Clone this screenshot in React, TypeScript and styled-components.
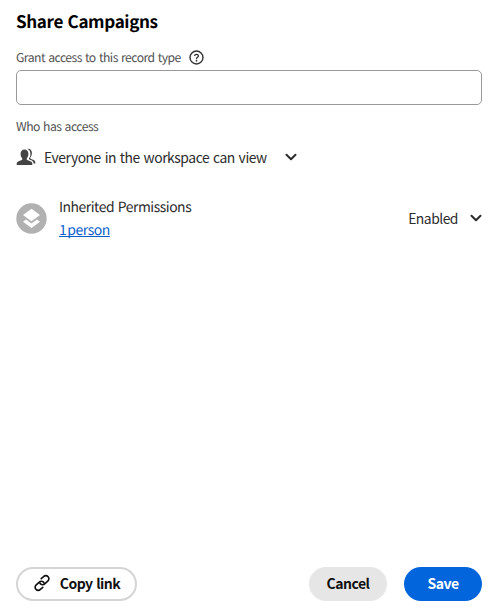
import React from "react";
import styled, { createGlobalStyle } from "styled-components";

const GlobalStyle = createGlobalStyle`
  *, *::before, *::after { box-sizing: border-box; }
  body {
    margin: 0;
    background: #fff;
    font-family: "Noto Sans CJK SC", "Noto Sans", sans-serif;
    text-rendering: geometricPrecision;
  }
`;

const Dialog = styled.main`
  display: flex;
  flex-direction: column;
  height: 611px;
  width: 500px;
  padding: 9px 18px 10px 16px;
  color: #2c2c2c;
`;

const Title = styled.h1`
  margin: 0;
  font-size: 17.1px;
  line-height: 24px;
  font-weight: 700;
  letter-spacing: -0.37px;
  word-spacing: 1px;
  color: #000;
`;

const LabelRow = styled.div`
  display: flex;
  align-items: center;
  gap: 8px;
  height: 16px;
  margin-top: 16px;
`;

const Label = styled.label`
  font-size: 12.2px;
  line-height: 16px;
  letter-spacing: -0.54px;
  word-spacing: 1px;
  color: #505050;
  white-space: nowrap;
`;

const AccessInput = styled.input`
  display: block;
  width: 466px;
  height: 35px;
  margin: 5px 0 0;
  padding: 0 10px;
  border: 1px solid #999;
  border-radius: 5px;
  background: #fff;
  font: inherit;
  outline: none;
`;

const SectionLabel = styled(Label)`
  display: block;
  margin-top: 13px;
`;

const AccessRow = styled.div`
  display: flex;
  align-items: center;
  height: 22px;
  margin-top: 12px;
`;

const Text = styled.span<{ $spacing: number }>`
  font-size: 13.9px;
  line-height: 22px;
  letter-spacing: ${({ $spacing }) => $spacing}px;
  word-spacing: 1.1px;
  white-space: nowrap;
`;

const PeopleIcon = styled.svg`
  flex: none;
  width: 20px;
  height: 18px;
  margin-right: 8px;
`;

const Picker = styled.button<{ $gap: number }>`
  display: flex;
  align-items: center;
  gap: ${({ $gap }) => $gap}px;
  padding: 0;
  border: 0;
  background: none;
  color: inherit;
  font: inherit;
`;

const PermissionRow = styled.div`
  display: flex;
  align-items: center;
  height: 46px;
  margin-top: 27px;
`;

const LayerIcon = styled.svg`
  flex: none;
  width: 31px;
  height: 31px;
`;

const PermissionText = styled.div`
  display: flex;
  flex-direction: column;
  align-items: flex-start;
  flex: 1;
  gap: 1px;
  margin-left: 12px;
  padding-top: 1px;
`;

const PersonLink = styled.a`
  font-size: 14px;
  line-height: 22px;
  letter-spacing: -0.45px;
  word-spacing: -1.8px;
  color: #0b5fcc;
  text-decoration: underline;
  text-decoration-thickness: 1px;
  text-underline-offset: 1px;
  text-decoration-skip-ink: none;
`;

const Footer = styled.footer`
  display: flex;
  align-items: center;
  margin-top: auto;
  height: 34px;
`;

type Variant = "outline" | "secondary" | "accent";

const variants: Record<Variant, string> = {
  outline: "width: 121px; border: 2px solid #d5d5d5; background: #fff; color: #111;",
  secondary: "width: 78px; margin-left: auto; background: #e6e6e6; color: #111;",
  accent: "width: 78px; margin-left: 17px; background: #0265dc; color: #fff;",
};

const Button = styled.button<{ $variant: Variant }>`
  display: flex;
  align-items: center;
  justify-content: center;
  gap: 9px;
  height: 34px;
  padding: 0 0 2px;
  border: 0;
  border-radius: 17px;
  font-family: inherit;
  font-size: 14px;
  line-height: 22px;
  font-weight: 700;
  letter-spacing: -0.5px;
  word-spacing: 0.8px;
  white-space: nowrap;
  ${({ $variant }) => variants[$variant]}
`;

const Chevron = () => (
  <svg width="12" height="8" viewBox="0 0 12 8" fill="none">
    <path d="M1.5 1.8 6 6.2l4.5-4.4" stroke="#2c2c2c" strokeWidth="2" strokeLinecap="round" strokeLinejoin="round" />
  </svg>
);

const HelpIcon = () => (
  <svg width="15" height="15" viewBox="0 0 15 15" fill="none">
    <circle cx="7.5" cy="7.5" r="6.5" stroke="#333" strokeWidth="1.4" />
    <path d="M5.7 5.4c.5-.7 1.1-1 1.9-1 1.1 0 1.8.7 1.8 1.5 0 1.4-1.9 1.4-1.9 2.8" stroke="#333" strokeWidth="1.3" strokeLinecap="round" />
    <circle cx="7.5" cy="10.8" r=".9" fill="#333" />
  </svg>
);

const LinkIcon = () => (
  <svg width="18" height="18" viewBox="0 0 18 18" fill="none" stroke="#111" strokeWidth="1.6" strokeLinecap="round" strokeLinejoin="round">
    <path d="M8.2 4.7l2.4-2.1a3 3 0 0 1 4.4 0 2.9 2.9 0 0 1 0 4.2l-3.3 3.1a2.9 2.9 0 0 1-4.2 0 2.4 2.4 0 0 1-.6-1" />
    <path d="M9.8 13.3l-2.4 2.1a3 3 0 0 1-4.4 0 2.9 2.9 0 0 1 0-4.2l3.3-3.1a2.9 2.9 0 0 1 4.2 0c.3.3.5.6.6 1" />
  </svg>
);

export default function App() {
  return (
    <>
      <GlobalStyle />
      <Dialog>
        <Title>Share Campaigns</Title>
        <LabelRow>
          <Label htmlFor="grant">Grant access to this record type</Label>
          <HelpIcon />
        </LabelRow>
        <AccessInput id="grant" />
        <SectionLabel as="span">Who has access</SectionLabel>
        <AccessRow>
          <PeopleIcon viewBox="0 0 20 18" fill="#444">
            <path d="M.7 17v-1.5c0-1.5 1-2.1 2.5-2.6l2.6-.9c.6-.2.7-1.2.2-1.9C5.1 9 4.6 7.7 4.6 5.8 4.6 3 6.1 1.4 8.5 1.4s3.9 1.6 3.9 4.4c0 1.9-.5 3.2-1.4 4.3-.5.7-.4 1.7.2 1.9l2.6.9c1.5.5 2.5 1.1 2.5 2.6V17z" />
            <path d="M11 .8c2.900-.7 4.900 1 4.900 4.100 0 1.800-.5 3.100-1.300 4.200-.5.700-.3 1.500.3 1.800l2.200.9c1.300.5 2.200 1.200 2.200 2.500v1.200h-1.700c-.2-1.800-1.100-2.800-2.900-3.500l-1.400-.6c-.5-.2-.5-.7-.1-1.300.8-1.200 1.200-2.600 1.200-4.400C14.400 3.300 13.100 1.500 11 .8z" />
          </PeopleIcon>
          <Picker $gap={18}>
            <Text $spacing={-0.45}>Everyone in the workspace can view</Text>
            <Chevron />
          </Picker>
        </AccessRow>
        <PermissionRow>
          <LayerIcon viewBox="0 0 31 31">
            <circle cx="15.5" cy="15.5" r="15.2" fill="#b1b1b1" />
            <path d="M15.5 5.8 24 12l-8.5 6.2L7 12z" fill="#fff" />
            <path d="M10 16.6 15.5 20.6l5.5-4L24 18.7l-8.5 6.2L7 18.7z" fill="#fff" />
          </LayerIcon>
          <PermissionText>
            <Text $spacing={-0.46}>Inherited Permissions</Text>
            <PersonLink href="#">1 person</PersonLink>
          </PermissionText>
          <Picker $gap={12}>
            <Text $spacing={-0.5}>Enabled</Text>
            <Chevron />
          </Picker>
        </PermissionRow>
        <Footer>
          <Button $variant="outline"><LinkIcon />Copy link</Button>
          <Button $variant="secondary">Cancel</Button>
          <Button $variant="accent">Save</Button>
        </Footer>
      </Dialog>
    </>
  );
}
